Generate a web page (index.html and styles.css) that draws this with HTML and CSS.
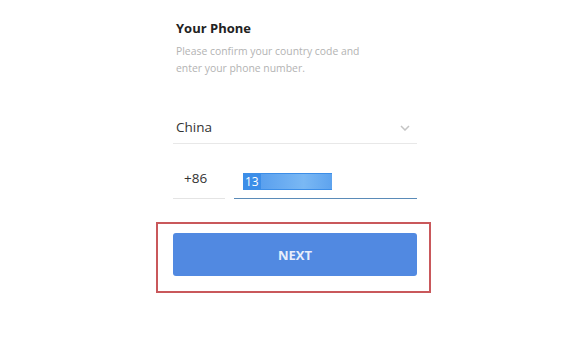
FILE: index.html
```html
<!DOCTYPE html>
<html lang="en">
<head>
  <meta charset="UTF-8">
  <title>Your Phone</title>
  <link rel="stylesheet" href="styles.css">
</head>
<body>
  <div class="login">
    <h1 class="titulo">Your Phone</h1>
    <p class="subtitulo">Please confirm your country code and<br>enter your phone number.</p>

    <div class="pais">
      <span>China</span>
      <svg class="flecha" width="10" height="6" viewBox="0 0 10 6">
        <path d="M1 1 L5 5 L9 1" fill="none" stroke="#c4c4c4" stroke-width="1.5"/>
      </svg>
    </div>

    <div class="telefono">
      <div class="codigo">+86</div>
      <div class="numero">
        <span class="seleccion">13<span class="borroso"></span></span>
      </div>
    </div>

    <div class="marco">
      <button class="boton">NEXT</button>
    </div>
  </div>
</body>
</html>
```

FILE: styles.css
```css
body {
  margin: 0;
  background: #ffffff;
  font-family: 'Open Sans', Arial, sans-serif;
  padding: 18px 0 0 173px;
}

.login {
  width: 244px;
}

.titulo {
  margin: 0 0 0 3px;
  font-size: 13px;
  line-height: 20px;
  font-weight: 700;
  color: #222222;
}

.subtitulo {
  margin: 5px 0 0 3px;
  font-size: 10.4px;
  line-height: 17px;
  color: #b3b3b3;
}

.pais {
  margin-top: 33px;
  display: flex;
  justify-content: space-between;
  align-items: center;
  padding: 0 7px 0 3px;
  height: 33px;
  border-bottom: 1px solid #e8e8e8;
  font-size: 13.5px;
  color: #333333;
}

.flecha {
  margin-top: 3px;
}

.telefono {
  margin-top: 23px;
  display: flex;
  gap: 9px;
  align-items: flex-end;
}

.codigo {
  width: 52px;
  box-sizing: border-box;
  padding-left: 11px;
  height: 32px;
  line-height: 22px;
  font-size: 13.5px;
  color: #333333;
  border-bottom: 1px solid #e4e4e4;
}

.numero {
  flex: 1;
  display: flex;
  align-items: flex-start;
  height: 32px;
  border-bottom: 1.5px solid #5a8bb8;
  box-sizing: border-box;
  padding: 6px 0 0 9px;
}

.seleccion {
  display: inline-flex;
  align-items: center;
  height: 17px;
  background: #3c8ee8;
  color: #ffffff;
  font-size: 12px;
  padding-left: 2px;
}

.borroso {
  display: inline-block;
  width: 71px;
  height: 15px;
  margin-left: 2px;
  background: linear-gradient(90deg, #5aa0ee, #7ab8f4 60%, #5ea3ee);
}

.marco {
  margin: 23px 0 0 -17px;
  width: 275px;
  border: 2px solid #c9585b;
  box-sizing: border-box;
  padding: 9px 12px 15px 15px;
}

.boton {
  width: 244px;
  height: 43px;
  border: none;
  border-radius: 3px;
  background: #5189e1;
  color: #e8eefb;
  font-family: 'Open Sans', Arial, sans-serif;
  font-size: 13px;
  font-weight: 700;
  cursor: pointer;
}
```
